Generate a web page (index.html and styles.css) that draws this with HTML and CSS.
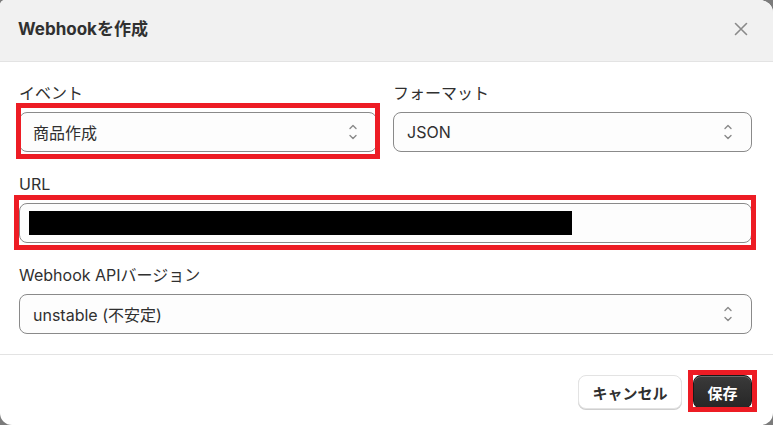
FILE: index.html
```html
<!DOCTYPE html>
<html lang="ja">
<head>
<meta charset="utf-8">
<link rel="stylesheet" href="styles.css">
</head>
<body>
<div class="dialog">
  <div class="header">
    <h1 class="title">Webhookを作成</h1>
    <button class="close" aria-label="閉じる">
      <svg width="20" height="20" viewBox="0 0 20 20"><path d="M4.5 4.5 L15.5 15.5 M15.5 4.5 L4.5 15.5" stroke="#8a8a8a" stroke-width="1.6" fill="none" stroke-linecap="round"/></svg>
    </button>
  </div>
  <div class="body">
    <div class="row two">
      <div class="field-group">
        <label class="label">イベント</label>
        <div class="field select">
          <span class="value">商品作成</span>
          <svg class="chev" width="8" height="18" viewBox="0 0 8 18"><path d="M1 5.5 L4 2.5 L7 5.5 M1 12.5 L4 15.5 L7 12.5" stroke="#8a8a8a" stroke-width="1.4" fill="none" stroke-linecap="round" stroke-linejoin="round"/></svg>
          <span class="mark mark-event"></span>
        </div>
      </div>
      <div class="field-group">
        <label class="label">フォーマット</label>
        <div class="field select">
          <span class="value">JSON</span>
          <svg class="chev" width="8" height="18" viewBox="0 0 8 18"><path d="M1 5.5 L4 2.5 L7 5.5 M1 12.5 L4 15.5 L7 12.5" stroke="#8a8a8a" stroke-width="1.4" fill="none" stroke-linecap="round" stroke-linejoin="round"/></svg>
        </div>
      </div>
    </div>
    <div class="row">
      <div class="field-group">
        <label class="label">URL</label>
        <div class="field input">
          <span class="redact"></span>
          <span class="mark mark-url"></span>
        </div>
      </div>
    </div>
    <div class="row">
      <div class="field-group">
        <label class="label">Webhook APIバージョン</label>
        <div class="field select">
          <span class="value">unstable (不安定)</span>
          <svg class="chev" width="8" height="18" viewBox="0 0 8 18"><path d="M1 5.5 L4 2.5 L7 5.5 M1 12.5 L4 15.5 L7 12.5" stroke="#8a8a8a" stroke-width="1.4" fill="none" stroke-linecap="round" stroke-linejoin="round"/></svg>
        </div>
      </div>
    </div>
  </div>
  <div class="footer">
    <button class="btn btn-secondary">キャンセル</button>
    <button class="btn btn-primary">保存<span class="mark mark-save"></span></button>
  </div>
</div>
</body>
</html>
```
FILE: styles.css
```css
* { box-sizing: border-box; }
html, body { margin: 0; padding: 0; }
body {
  width: 773px;
  height: 425px;
  background: #7b7b7b;
  font-family: Inter, "Noto Sans CJK JP", sans-serif;
  color: #303030;
  overflow: hidden;
}
.dialog {
  width: 773px;
  height: 425px;
  background: #ffffff;
  border-radius: 5px 13px 12px 12px;
  overflow: hidden;
  display: flex;
  flex-direction: column;
}
.header {
  height: 62px;
  flex: none;
  background: #f1f1f1;
  border-bottom: 1px solid #e3e3e3;
  display: flex;
  align-items: center;
  justify-content: space-between;
  padding: 0 22px 4px 18px;
}
.title {
  margin: 0;
  font-size: 17px;
  font-weight: 700;
  line-height: 20px;
  color: #303030;
}
.close {
  border: 0;
  background: none;
  padding: 0;
  width: 20px;
  height: 20px;
  display: flex;
}
.body {
  padding: 21px 21px 20px 19px;
  display: flex;
  flex-direction: column;
  gap: 22px;
}
.row.two {
  display: grid;
  grid-template-columns: 358px 1fr;
  gap: 16px;
}
.label {
  display: block;
  font-size: 16px;
  line-height: 20px;
  margin-bottom: 9px;
  color: #303030;
}
.field {
  position: relative;
  height: 40px;
  border: 1px solid #8a8a8a;
  border-radius: 8px;
  background: #fdfdfd;
  display: flex;
  align-items: center;
  padding: 0 19px 0 13px;
  font-size: 16px;
}
.value { flex: 1; color: #303030; }
.chev { flex: none; }
.input { padding-left: 9px; }
.redact {
  display: block;
  width: 543px;
  height: 24px;
  background: #000;
}
.footer {
  flex: 1;
  border-top: 1px solid #e3e3e3;
  display: flex;
  justify-content: flex-end;
  align-items: flex-start;
  gap: 11px;
  padding: 20px 21px 0 0;
}
.btn {
  position: relative;
  height: 34px;
  border-radius: 8px;
  font-family: Inter, "Noto Sans CJK JP", sans-serif;
  font-size: 15px;
  font-weight: 700;
  padding: 0;
}
.btn-secondary {
  width: 104px;
  background: #ffffff;
  color: #303030;
  border: 1px solid #e3e3e3;
  box-shadow: 0 1px 0 #cfcfcf;
}
.btn-primary {
  width: 59px;
  background: linear-gradient(#3a3a3a, #262626);
  color: #ffffff;
  border: 1px solid #1a1a1a;
  box-shadow: inset 0 1px 0 rgba(255,255,255,0.25);
}
.mark {
  position: absolute;
  border: 5px solid #ed1c24;
  pointer-events: none;
}
.mark-event { top: -10px; bottom: -8px; left: -4px; right: -4px; }
.mark-url { top: -9px; bottom: -8px; left: -6px; right: -5px; }
.mark-save { top: -6px; bottom: -4px; left: -6px; right: -6px; }
```
